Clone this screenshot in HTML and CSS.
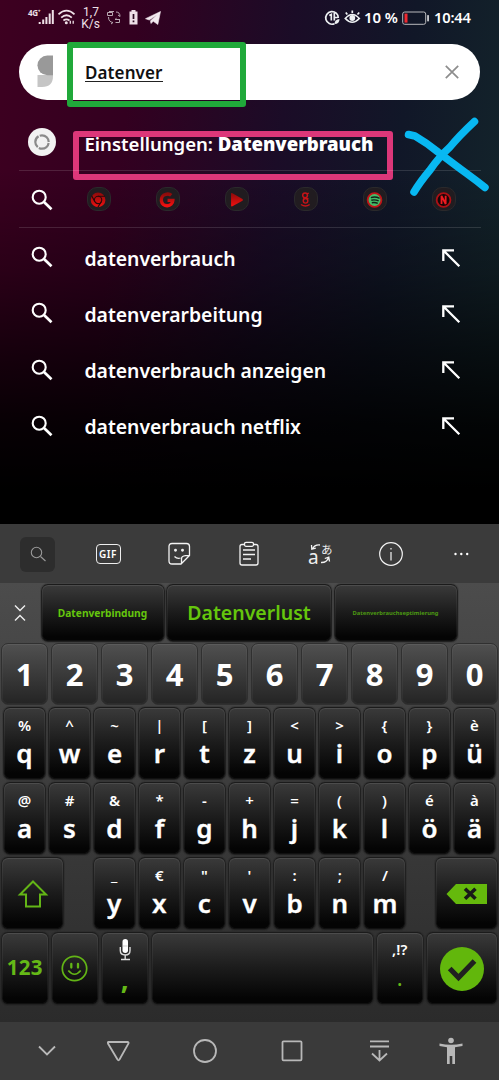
FILE: index.html
```html
<!DOCTYPE html>
<html lang="de">
<head>
<meta charset="utf-8">
<title>Suche</title>
<link rel="stylesheet" href="styles.css">
</head>
<body>
<svg width="0" height="0" class="defs">
  <defs>
    <linearGradient id="red" x1="0" y1="0" x2="0" y2="1"><stop offset="0" stop-color="#8d0b0b"/><stop offset="1" stop-color="#f01010"/></linearGradient>
    <symbol id="search" viewBox="0 0 22 22"><circle cx="8.2" cy="8.2" r="6.500" fill="none" stroke="#fff" stroke-width="2.1"/><path d="M13 13l7.500 7.300" stroke="#fff" stroke-width="2.700"/></symbol>
    <symbol id="fill" viewBox="0 0 20 20"><path d="M2.300 13V2.300H13M2.500 2.500L18.300 18.300" fill="none" stroke="#fff" stroke-width="2.300"/></symbol>
  </defs>
</svg>
<div class="phone">
  <header class="status">
    <svg class="status-left" width="150" height="36" viewBox="0 0 150 36" fill="none" stroke="#eee0e7">
      <g fill="#eee0e7" stroke="none">
        <rect x="38.7" y="22" width="2" height="2"/><rect x="42.2" y="19.5" width="2" height="4.5"/><rect x="45.4" y="17" width="2" height="7"/><rect x="48.7" y="13.5" width="2" height="10.5"/><rect x="51.8" y="10" width="2" height="14"/>
        <text class="net" x="28" y="16">4G⁺</text>
        <text class="rate" x="91" y="15.500" text-anchor="middle">1,7</text>
        <text class="rate" x="90.500" y="28" text-anchor="middle">K/s</text>
      </g>
      <path d="M58.500 14.300Q66.500 7 74.500 14.300M61.200 17.600Q66.500 13 71.800 17.600M63.400 20.500Q66.400 18.400 69.500 20.500" stroke-width="1.800"/>
      <circle cx="66.300" cy="22.700" r="1.500" fill="#eee0e7" stroke="none"/><path d="M70.300 20.800v3M73.200 20.800v3" stroke-width="1.300"/>
      <path d="M107.500 15.500v-3h5v3zM109 11.500h5M116 12q4 0 4 4.500l-2-1.500M108.500 17q0 5 4.500 5.500l-2 1.500M120 19.500h-5l1.500-1.200M115.500 22.500h4v-2.500" stroke-width="1" stroke="#b9a9b2"/>
      <path d="M131.500 10h4v1.500h2v13h-8v-13h2z" fill="#eee0e7" stroke="none"/><path d="M133.500 14v5M133.500 20.500v1.700" stroke="#2a0b20" stroke-width="1.700"/>
    </svg>
    <svg class="plane" width="18" height="36" viewBox="145 0 18 36"><path d="M145.500 18.700L160.500 11.500 157.800 24.500 153.300 21.300 150.900 23.500 150.500 20.700 157 14.700 149.300 20z" fill="#f3eaf0" stroke="#f3eaf0" stroke-width=".6"/></svg>
    <svg class="status-icons" width="40" height="36" viewBox="324 0 40 36" fill="none" stroke="#edf0f2" stroke-width="1.700">
      <path d="M334.500 23.700A6.300 6.300 0 1 1 338.300 18M329.300 15.500l2-1v6M334.300 20.500v-7.500M334.500 17.500l3.200 0" /><path d="M334.500 24q0-4.500 5-5q0 5-5 5z" fill="#edf0f2" stroke="none"/>
      <path d="M345.300 18.500Q352.200 10.500 359.300 18.500Q352.200 26 345.300 18.500zM347.300 14.500l-1.500-2M352.300 13v-2.500M357.500 14.500l1.700-2"/><circle cx="352.300" cy="18" r="2.900" fill="#edf0f2" stroke="none"/>
    </svg>
    <span class="percent">10 %</span>
    <svg class="battery" width="28" height="16" viewBox="0 0 28 16"><rect x=".7" y="2" width="23" height="12.300" rx="2" fill="none" stroke="#b9b9bc"/><rect x="2.500" y="3.600" width="3" height="9" fill="#ef2930"/><rect x="25.200" y="5" width="1.700" height="6.500" rx=".7" fill="#d9d9dc"/></svg>
    <time class="clock">10:44</time>
  </header>

  <div class="searchbar">
    <svg width="17" height="34" viewBox="0 0 17 34"><path d="M.5 20H16v1q0 11-11 11H.5z" fill="#c5c5c5"/><path d="M10.300.5H16V20.200H10.300A9.850 9.850 0 0 1 10.300.5z" fill="#999"/></svg>
    <span class="query">Datenver</span>
    <svg class="clear" width="14" height="14" viewBox="0 0 14 14"><path d="M.8.8l12.400 12.400M13.200.8L.8 13.200" stroke="#8d8d8d" stroke-width="1.700"/></svg>
    <i class="mark green"></i>
  </div>

  <main class="results">
    <div class="row setting">
      <svg class="lead" width="28" height="28" viewBox="0 0 28 28"><circle cx="14" cy="14" r="14" fill="#f2f2f2"/><circle cx="14" cy="14" r="6.700" fill="none" stroke="#8b8b8b" stroke-width="2.200" stroke-dasharray="12.730 1.300" stroke-dashoffset="-1"/></svg>
      <span class="label"><span>Einstellungen:</span> <b>Datenverbrauch</b></span>
      <i class="mark pink"></i>
      <svg class="cross" width="90" height="84" viewBox="402 114 90 84" fill="none" stroke="#08b8f2" stroke-width="7.500" stroke-linecap="round" stroke-linejoin="round"><path d="M408.500 134.500L415 136Q427 143 438 152Q455 165 466 173Q477 181 485 187.500M474.500 121.500Q459 136 450 147Q439 157 430 170Q420 182 414 192"/></svg>
    </div>
    <div class="row apps">
      <svg class="glass" width="22" height="22"><use href="#search"/></svg>
      <div class="app-list">
        <svg class="app" viewBox="0 0 24 24"><circle cx="11" cy="13" r="8" fill="url(#red)"/><circle cx="11" cy="13" r="4" fill="none" stroke="#280909" stroke-width="1.200"/><path d="M11 9h7.500M7.500 15L4 8.500M14.500 15l-3.800 6" stroke="#280909" stroke-width="1.300"/></svg>
        <svg class="app" viewBox="0 0 24 24"><path d="M15.500 8Q13 5.700 9.500 7A6.300 6.300 0 1 0 17.300 13.500H11.500" fill="none" stroke="url(#red)" stroke-width="3.700"/></svg>
        <svg class="app" viewBox="0 0 24 24"><path d="M5.500 6Q5.500 5 7 5.700L18 12Q19 13 18 14L7 20Q5.500 20.500 5.500 19z" fill="url(#red)"/></svg>
        <svg class="app" viewBox="0 0 24 24" fill="none" stroke="#c41318" stroke-width="1.600"><circle cx="11" cy="8" r="2.600"/><circle cx="11.500" cy="14" r="2.500"/><path d="M13 6.500l2-1M9 11q4-.5 5.500 1M6.500 18q5 3.500 9.500 0"/></svg>
        <svg class="app" viewBox="0 0 24 24"><circle cx="11.500" cy="13" r="7.500" fill="#45bd68" stroke="#c11419" stroke-width="2"/><path d="M7.500 10.500q5-1.500 9.500.8M8 13.300q4-1 8 .8M8.500 16q3.500-.8 6.500.7" fill="none" stroke="#102218" stroke-width="1.600"/></svg>
        <svg class="app" viewBox="0 0 24 24"><circle cx="11.500" cy="13" r="7.500" fill="#180607" stroke="#ad1015" stroke-width="2"/><path d="M9.300 17.500v-9l4.500 9v-9" fill="none" stroke="#ef1a20" stroke-width="2"/></svg>
      </div>
    </div>
    <div class="row"><svg class="glass" width="22" height="22"><use href="#search"/></svg><span class="label">datenverbrauch</span><svg class="arrow" width="20" height="20"><use href="#fill"/></svg></div>
    <div class="row"><svg class="glass" width="22" height="22"><use href="#search"/></svg><span class="label">datenverarbeitung</span><svg class="arrow" width="20" height="20"><use href="#fill"/></svg></div>
    <div class="row"><svg class="glass" width="22" height="22"><use href="#search"/></svg><span class="label">datenverbrauch anzeigen</span><svg class="arrow" width="20" height="20"><use href="#fill"/></svg></div>
    <div class="row"><svg class="glass" width="22" height="22"><use href="#search"/></svg><span class="label">datenverbrauch netflix</span><svg class="arrow" width="20" height="20"><use href="#fill"/></svg></div>
  </main>

  <section class="toolbar">
    <span class="tool-search"><svg width="18" height="18" viewBox="0 0 18 18" fill="none" stroke="#999" stroke-width="1.100"><circle cx="7.500" cy="7.500" r="5.200"/><path d="M11.500 11.500l5 4.500"/></svg></span>
    <span class="gif">GIF</span>
    <svg width="26" height="26" viewBox="0 0 26 26" fill="none" stroke="#f3f3f3" stroke-width="1.300"><path d="M6 2.500H20.500Q23.500 2.500 23.500 5.500V14.500L15 23H6Q3 23 3 20V5.500Q3 2.500 6 2.500zM23.300 14.700H19.500Q15.500 15 15.500 18V22.800M8.500 15.500Q11 18 14.500 17"/><circle cx="9.500" cy="9.300" r=".8" fill="#fff"/><circle cx="16.500" cy="9.300" r=".8" fill="#fff"/></svg>
    <svg width="26" height="26" viewBox="0 0 26 26" fill="none" stroke="#f3f3f3" stroke-width="1.300"><path d="M8 3.500H6Q4 3.500 4 5.500V22Q4 24 6 24H20Q22 24 22 22V5.500Q22 3.500 20 3.500H18M7 9h12M7 13.500h12M7 18h8"/><rect x="8.500" y="1.300" width="9" height="4" rx="1.500"/></svg>
    <svg class="translate" width="26" height="26" viewBox="0 0 26 26" fill="none" stroke="#f3f3f3" stroke-width="1.300"><text class="tr-a" x="1" y="23">a</text><text class="tr-j" x="14" y="12.500">あ</text><path d="M13 4Q7.500 3.500 5.500 8M4.500 4l.3 4.200 4-1M14 21.500q6 .3 7.500-5M17.800 17.500l4-1.300.7 4.300"/></svg>
    <svg width="26" height="26" viewBox="0 0 26 26" fill="none" stroke="#f3f3f3" stroke-width="1.200"><circle cx="13" cy="13" r="11.300"/><path d="M13 11v8.500M13 7v1.600"/></svg>
    <svg width="26" height="26" viewBox="0 0 26 26" fill="#fff"><circle cx="7.500" cy="13" r="1.200"/><circle cx="13.300" cy="13" r="1.200"/><circle cx="19.200" cy="13" r="1.200"/></svg>
  </section>

  <section class="keyboard">
    <div class="suggest">
      <svg class="collapse" width="12" height="18" viewBox="0 0 12 18" fill="none" stroke="#eee" stroke-width="1.400"><path d="M1 1.500l5 5 5-5M1 16.500l5-5 5 5"/></svg>
      <span class="key word w1">Datenverbindung</span><span class="key word w2">Datenverlust</span><span class="key word w3">Datenverbrauchseptimierung</span>
    </div>
    <div class="keys digits"><b class="key">1</b><b class="key">2</b><b class="key">3</b><b class="key">4</b><b class="key">5</b><b class="key">6</b><b class="key">7</b><b class="key">8</b><b class="key">9</b><b class="key">0</b></div>
    <div class="keys letters">
      <div class="key"><i>%</i><b>q</b></div><div class="key"><i>^</i><b>w</b></div><div class="key"><i>~</i><b>e</b></div><div class="key"><i>|</i><b>r</b></div><div class="key"><i>[</i><b>t</b></div><div class="key"><i>]</i><b>z</b></div><div class="key"><i>&lt;</i><b>u</b></div><div class="key"><i>&gt;</i><b>i</b></div><div class="key"><i>{</i><b>o</b></div><div class="key"><i>}</i><b>p</b></div><div class="key"><i>è</i><b>ü</b></div>
    </div>
    <div class="keys letters">
      <div class="key"><i>@</i><b>a</b></div><div class="key"><i>#</i><b>s</b></div><div class="key"><i>&amp;</i><b>d</b></div><div class="key"><i>*</i><b>f</b></div><div class="key"><i>-</i><b>g</b></div><div class="key"><i>+</i><b>h</b></div><div class="key"><i>=</i><b>j</b></div><div class="key"><i>(</i><b>k</b></div><div class="key"><i>)</i><b>l</b></div><div class="key"><i>é</i><b>ö</b></div><div class="key"><i>à</i><b>ä</b></div>
    </div>
    <div class="keys shift-row">
      <div class="key wide"><svg width="32" height="28" viewBox="0 0 32 28"><path d="M16 1.500L29 14.500H23V26.500H9V14.500H3z" fill="none" stroke="#63b516" stroke-width="2"/></svg></div>
      <div class="mid"><div class="key"><i>_</i><b>y</b></div><div class="key"><i>€</i><b>x</b></div><div class="key"><i>"</i><b>c</b></div><div class="key"><i>'</i><b>v</b></div><div class="key"><i>:</i><b>b</b></div><div class="key"><i>;</i><b>n</b></div><div class="key"><i>/</i><b>m</b></div></div>
      <div class="key wide"><svg width="42" height="20" viewBox="0 0 42 20"><path d="M.5 10L10 0H41V20H10z" fill="#65b90c"/><path d="M19 4.800l10.500 10M29.500 4.800l-10.500 10" stroke="#191919" stroke-width="3.600"/></svg></div>
    </div>
    <div class="keys bottom-row">
      <div class="key num">123</div>
      <div class="key"><svg width="27" height="27" viewBox="0 0 27 27" fill="none" stroke="#63b516" stroke-width="1.700"><circle cx="13.500" cy="13.500" r="12.200"/><path d="M7.300 15.500Q13.500 23 19.700 15.500"/><path d="M10.300 9v3.500M17 9v3.500" stroke-width="2.300" stroke-linecap="round"/></svg></div>
      <div class="key comma"><svg width="12" height="22" viewBox="0 0 12 22"><rect x="3.500" y="0" width="5.500" height="14" rx="2.750" fill="#fff"/><path d="M4 7h4.500M1.300 8v3.500Q1.300 16 6.200 16T11 11.500V8M6.200 16v4M2 20.500h9" fill="none" stroke="#ddd" stroke-width="1.400"/></svg><b>,</b></div>
      <div class="key"></div>
      <div class="key period"><i>,!?</i><b>.</b></div>
      <div class="key"><svg width="44" height="44" viewBox="0 0 44 44"><circle cx="22" cy="22" r="22" fill="#62b70c"/><path d="M9.700 21.500L18.500 30.500 34.500 14" fill="none" stroke="#202020" stroke-width="5.200"/></svg></div>
    </div>
  </section>

  <nav class="navbar">
    <svg width="499" height="58" viewBox="0 1022 499 58" fill="none" stroke="#b8b8b8" stroke-width="1.800">
      <path d="M39 1046.500l8 8 8-8M108.500 1042h19q1.500 0 1 1.500l-9 16q-1 1.500-2 0l-9.500-16q-.5-1.500.5-1.500z"/><circle cx="205" cy="1051" r="11"/><rect x="282.500" y="1041.300" width="19" height="19" rx="1"/><path d="M370 1041.300h19M370 1046.500h19M379.500 1050v10M372 1053.500l7.500 7 7.500-7"/>
      <g fill="#b8b8b8" stroke="none"><circle cx="451" cy="1040.500" r="2.800"/><path d="M439.500 1043.500q11.500 2.500 23 0v2.500l-7.500 1.300V1064h-2.700v-8h-2.600v8H447v-16.700l-7.500-1.300z"/></g>
    </svg>
  </nav>
</div>
</body>
</html>
```
FILE: styles.css
```css
* { box-sizing: border-box; }
body { margin: 0; font-family: "Noto Sans", sans-serif; color: #fff; background: #000; }
.defs { position: absolute; }
svg { display: block; flex: none; }
i { font-style: normal; }
.phone {
  width: 499px; height: 1080px; display: flex; flex-direction: column; overflow: hidden;
  background:
    linear-gradient(180deg, transparent 0, transparent 170px, rgba(0,0,0,.28) 270px, rgba(0,0,0,.6) 350px, rgba(0,0,0,.88) 425px, #000 490px),
    linear-gradient(97deg, #3d0020 0, #330020 22%, #1b0c27 47%, #111728 66%, #13252b 86%, #12272b 100%);
}
.status { height: 36px; flex: none; display: flex; align-items: center; font-weight: 600; font-size: 14px; }
.status-left { width: 150px; }
.net { font-size: 8px; font-weight: 700; letter-spacing: -.3px; }
.rate { font: 12px Roboto, sans-serif; }
.plane { margin-left: -5px; }
.status-icons { margin-left: 161px; }
.percent { width: 38px; white-space: nowrap; font-size: 15px; letter-spacing: -.1px; margin-top: -2px; }
.battery { margin-top: -1px; }
.clock { margin-left: 4px; margin-top: -2px; font-size: 14.700px; letter-spacing: -.2px; }
.searchbar {
  position: relative; flex: none; height: 56px; margin: 8px 19px 0; border-radius: 28px;
  background: #fff; display: flex; align-items: center; padding: 0 21px 0 17.500px;
}
.query { margin-left: 31.500px; color: #111; font-size: 17px; font-weight: 600; line-height: 18px; border-bottom: 1px solid #222; height: 18px; margin-top: 1px; letter-spacing: .1px; }
.clear { margin-left: auto; }
.mark { position: absolute; display: block; border-style: solid; }
.green { left: 48px; top: -2px; width: 179px; height: 65px; border: 6px solid #20a93a; border-radius: 3px; }
.pink { left: 73px; top: 16px; width: 320px; height: 49px; border: 6.500px solid #dc3779; border-radius: 3px; }
.cross { position: absolute; left: 402px; top: -1px; z-index: 2; }
.results { height: 424px; flex: none; padding-top: 15px; }
.row { position: relative; height: 56.200px; display: flex; align-items: center; padding: 4px 38px 0 31px; }
.setting { padding-top: 0; padding-left: 28px; }
.apps { padding-top: 0; height: 57px; }
.setting::after, .apps::after { content: ""; position: absolute; left: 19px; right: 18px; bottom: 0; height: 1px; background: rgba(255,255,255,.13); }
.glass { margin-top: -2px; }
.apps .glass { margin-top: 1px; }
.label { margin-left: 31.500px; font-size: 19.400px; font-weight: 600; white-space: nowrap; letter-spacing: -.03px; }
.setting .label { margin-left: 28.500px; margin-top: 1px; font-size: 18.600px; }
.setting .lead { margin-top: -2px; }
.arrow { margin-left: auto; margin-top: -1px; }
.app-list { margin-left: 33.500px; display: flex; gap: 45px; }
.app { width: 24px; height: 24px; border-radius: 10px; background: #211c20; border: 1px solid #2a292b; margin-top: -1px; }
.toolbar {
  height: 60px; flex: none; background: #3b3b3b; padding: 0 0 0 20px;
  display: flex; align-items: center;
}
.tool-search { width: 35px; height: 35px; border-radius: 6px; background: #2d2d2d; display: grid; place-items: center; margin-right: 40.500px; }
.gif { width: 25px; height: 20px; border: 1.300px solid #eee; border-radius: 4px; font-size: 10px; line-height: 18px; text-align: center; font-weight: 600; letter-spacing: .5px; margin-right: 45px; }
.toolbar > svg + svg { margin-left: 44.700px; }
.translate { overflow: visible; }
.tr-a { font-size: 19px; fill: #eee; stroke: none; }
.tr-j { font: 11.500px "Noto Sans CJK JP", sans-serif; fill: #eee; stroke: none; }
.keyboard { height: 438px; flex: none; background: linear-gradient(#4c4c4c, #2b2b2b); margin-top: -1px; height: 439px; }
.key {
  background: linear-gradient(#3a3a3a 0, #1c1c1c 48%, #040404 92%); border-radius: 7px;
  border: 1px solid #202020; border-top-color: #1b1b1b; box-shadow: inset 0 1px 0 #4c4c4c, inset 0 0 0 1px rgba(255,255,255,.05), 0 0 0 1px rgba(20,20,20,.18);
  display: flex; align-items: center; justify-content: center; min-width: 0;
}
.suggest { height: 60px; display: grid; grid-template-columns: 39px 124px 166px 124px; column-gap: 1.500px; padding-top: .5px; padding-bottom: 1px; align-items: center; }
.collapse { margin-left: 14px; }
.word { height: 58px; color: #65c60d; font-weight: 700; }
.w1 { font-size: 10.200px; }
.w2 { font-size: 19.500px; font-weight: 600; }
.w3 { font-size: 5.800px; color: #4c9812; }
.keys { display: grid; }
.digits { grid-template-columns: repeat(10, 1fr); gap: 3px; padding: 0 1px; height: 62px; }
.digits .key { font-size: 31px; line-height: 60px; background: linear-gradient(#505050, #242424); border-color: #303030; box-shadow: inset 0 1px #5b5b5b, inset 0 0 0 1px rgba(255,255,255,.04); }
.letters { grid-template-columns: repeat(11, 1fr); gap: 2px; padding: 0 3px; margin-top: 2px; height: 73px; }
.letters .key, .mid .key { flex-direction: column; justify-content: flex-start; padding-top: 7px; }
.letters i, .mid i, .period i { font-size: 15px; line-height: 20px; height: 20px; font-weight: 600; }
.letters b, .mid b { font-size: 26px; line-height: 30px; margin-top: 3px; font-weight: 600; -webkit-text-stroke: .35px #fff; }
.shift-row { height: 73px; margin-top: 2px; grid-template-columns: 63px 314px 63px; justify-content: space-between; padding: 0 1px; }
.mid { display: grid; grid-template-columns: repeat(7, 1fr); gap: 2px; }
.bottom-row { height: 73px; margin-top: 2px; padding: 0 1px; gap: 2px; grid-template-columns: 48px 48px 48px 223px 48px 1fr; }
.bottom-row .key { margin-left: -.5px; }
.num { color: #65b917; font-size: 20.500px; font-weight: 700; padding-bottom: 3px; letter-spacing: .3px; }
.comma, .period { flex-direction: column; justify-content: flex-start; padding-top: 6px; color: #65b917; }
.comma b { font-size: 28px; line-height: 30px; margin-top: 2px; }
.period i { color: #fff; }
.period b { font-size: 22px; line-height: 22px; margin-top: 7px; font-weight: 400; }
.navbar { height: 58px; background: #3a3a3a; flex: none; }
```
